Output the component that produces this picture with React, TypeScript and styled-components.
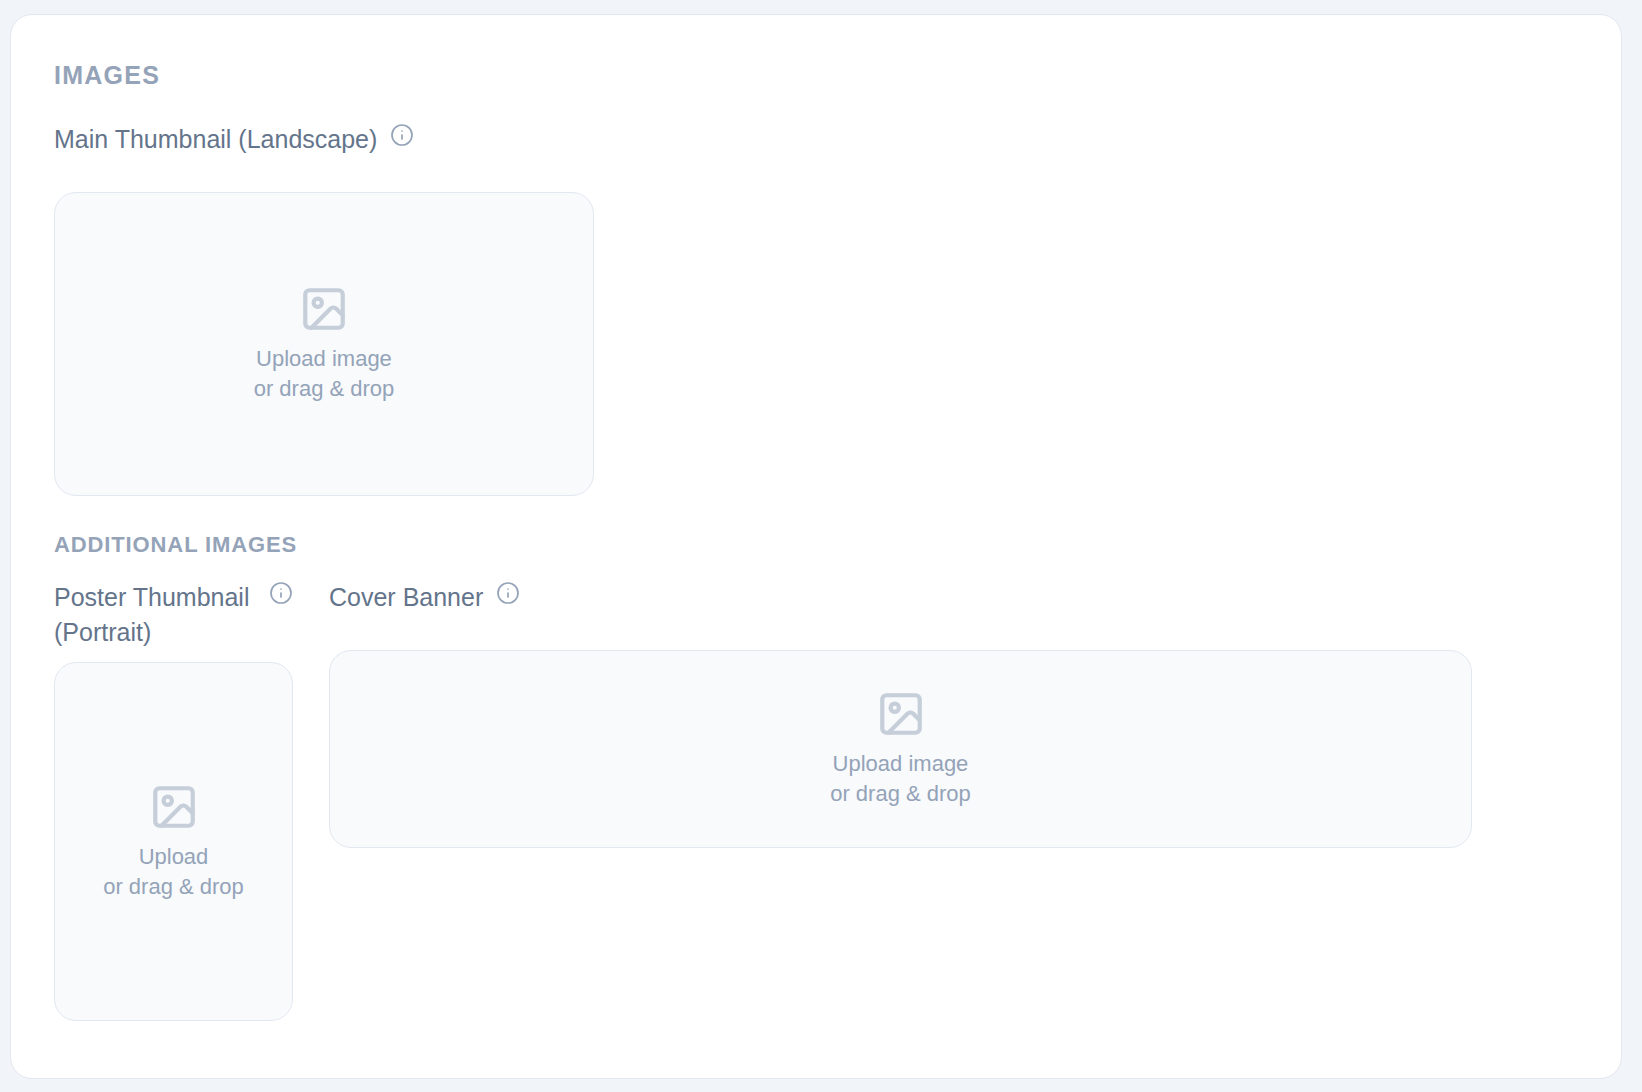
import React from "react";
import styled, { createGlobalStyle } from "styled-components";
import { Image as ImageIcon, Info } from "lucide-react";

const GlobalStyle = createGlobalStyle`
  *, *::before, *::after {
    box-sizing: border-box;
  }
  body {
    margin: 0;
    background: #f1f5f9;
    font-family: "Liberation Sans", Helvetica, Arial, sans-serif;
  }
`;

const Page = styled.main`
  min-height: 100vh;
  padding: 14px 20px 13px 10px;
`;

const Card = styled.section`
  padding: 43px 43px 57px;
  background: #ffffff;
  border: 1px solid #e2e8f0;
  border-radius: 22px;
`;

const Title = styled.h2`
  margin: 0 0 29px;
  color: #94a3b8;
  font-size: 25px;
  font-weight: 700;
  line-height: 35px;
  letter-spacing: 0.05em;
  text-transform: uppercase;
`;

const Subtitle = styled.h3`
  margin: 34px 0 20px;
  color: #94a3b8;
  font-size: 22px;
  font-weight: 700;
  line-height: 30px;
  letter-spacing: 0.04em;
  text-transform: uppercase;
`;

const Field = styled.div<{ $maxWidth?: number }>`
  display: flex;
  flex-direction: column;
  gap: 12px;
  max-width: ${({ $maxWidth }) => ($maxWidth ? `${$maxWidth}px` : "none")};
`;

const FieldHeader = styled.div`
  display: flex;
  align-items: flex-start;
  gap: 13px;
  min-height: 58px;
`;

const Label = styled.label`
  color: #64748b;
  font-size: 25px;
  line-height: 35px;
`;

const InfoButton = styled.button`
  display: flex;
  flex-shrink: 0;
  padding: 1px 0 0;
  border: 0;
  background: none;
  color: #94a3b8;
  cursor: help;
`;

const DropZone = styled.button<{ $height: number }>`
  display: flex;
  flex-direction: column;
  align-items: center;
  justify-content: center;
  gap: 10px;
  width: 100%;
  height: ${({ $height }) => $height}px;
  padding: 0;
  border: 1px solid #e2e8f0;
  border-radius: 22px;
  background: #f8fafc;
  color: #94a3b8;
  font-family: inherit;
  font-size: 22px;
  line-height: 30px;
  cursor: pointer;

  svg {
    opacity: 0.5;
  }
`;

const Line = styled.span`
  display: block;
`;

const AdditionalGrid = styled.div`
  display: grid;
  grid-template-columns: 239px minmax(0, 1143px);
  align-items: start;
  gap: 36px;
`;

type UploadFieldProps = {
  id: string;
  label: string;
  action: string;
  height: number;
  maxWidth?: number;
};

function UploadField({ id, label, action, height, maxWidth }: UploadFieldProps) {
  return (
    <Field $maxWidth={maxWidth}>
      <FieldHeader>
        <Label htmlFor={id}>{label}</Label>
        <InfoButton type="button" aria-label={`About ${label}`}>
          <Info size={24} strokeWidth={1.7} />
        </InfoButton>
      </FieldHeader>
      <DropZone id={id} type="button" $height={height}>
        <ImageIcon size={50} strokeWidth={2} />
        <span>
          <Line>{action}</Line>
          <Line>or drag &amp; drop</Line>
        </span>
      </DropZone>
    </Field>
  );
}

export default function App() {
  return (
    <>
      <GlobalStyle />
      <Page>
        <Card>
          <Title>Images</Title>
          <UploadField
            id="main-thumbnail"
            label="Main Thumbnail (Landscape)"
            action="Upload image"
            height={304}
            maxWidth={540}
          />
          <Subtitle>Additional Images</Subtitle>
          <AdditionalGrid>
            <UploadField
              id="poster-thumbnail"
              label="Poster Thumbnail (Portrait)"
              action="Upload"
              height={359}
            />
            <UploadField
              id="cover-banner"
              label="Cover Banner"
              action="Upload image"
              height={198}
            />
          </AdditionalGrid>
        </Card>
      </Page>
    </>
  );
}
